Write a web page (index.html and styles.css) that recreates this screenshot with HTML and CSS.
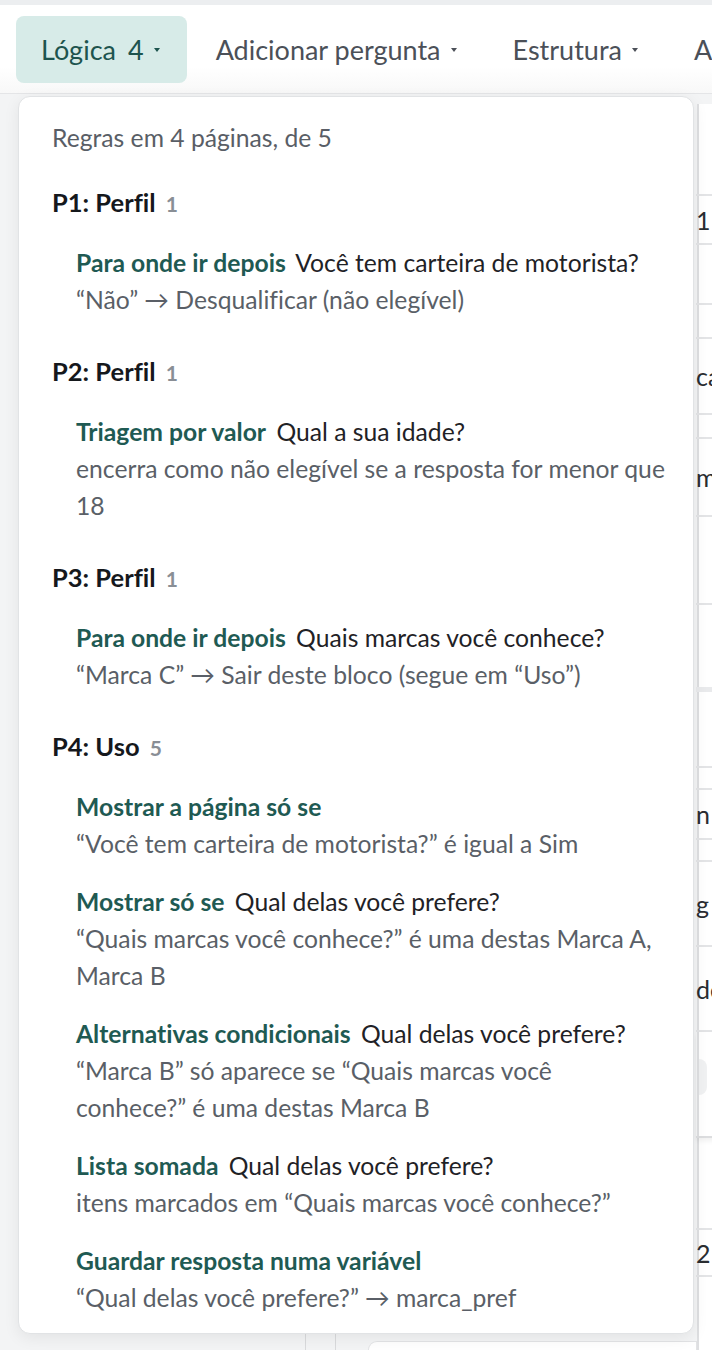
FILE: index.html
```html
<!DOCTYPE html>
<html lang="pt-BR">
<head>
    <meta charset="UTF-8">
    <meta name="viewport" content="width=device-width, initial-scale=1.0">
    <title>Lógica</title>
    <link rel="stylesheet" href="styles.css">
</head>
<body>
    <div class="top-strip"></div>

    <header class="toolbar">
        <div class="tab tab-active">Lógica<span class="tab-count">4</span><span class="caret"></span></div>
        <div class="tab">Adicionar pergunta<span class="caret"></span></div>
        <div class="tab">Estrutura<span class="caret"></span></div>
        <div class="tab">Aparência<span class="caret"></span></div>
    </header>

    <main class="workspace">
        <div class="canvas">
            <div class="canvas-foot">
                <div class="foot-rail"></div>
                <div class="foot-card"></div>
            </div>
        </div>

        <!-- planilha de perguntas atrás do menu -->
        <div class="sheet">
            <div class="sheet-row" style="height: 92px"></div>
            <div class="sheet-row" style="height: 49px">1</div>
            <div class="sheet-row" style="height: 60px"></div>
            <div class="sheet-row" style="height: 34px"></div>
            <div class="sheet-row" style="height: 76px">ca</div>
            <div class="sheet-row" style="height: 24px"></div>
            <div class="sheet-row" style="height: 78px">m</div>
            <div class="sheet-row" style="height: 88px"></div>
            <div class="sheet-row sheet-break" style="height: 87px"></div>
            <div class="sheet-row" style="height: 76px"></div>
            <div class="sheet-row" style="height: 22px"></div>
            <div class="sheet-row" style="height: 50px">n</div>
            <div class="sheet-row" style="height: 22px"></div>
            <div class="sheet-row" style="height: 85px">g</div>
            <div class="sheet-row" style="height: 85px">de</div>
            <div class="sheet-row sheet-end" style="height: 106px"><span class="sheet-pill"></span></div>
            <div class="sheet-row" style="height: 92px"></div>
            <div class="sheet-row" style="height: 47px">2</div>
        </div>
    </main>

    <div class="logic-menu">
        <div class="logic-summary">Regras em 4 páginas, de 5</div>

        <section class="logic-page">
            <h3 class="page-title">P1: Perfil <span class="page-count">1</span></h3>
            <div class="rule">
                <div><span class="rule-kind">Para onde ir depois</span> Você tem carteira de motorista?</div>
                <div class="rule-detail">“Não” → Desqualificar (não elegível)</div>
            </div>
        </section>

        <section class="logic-page">
            <h3 class="page-title">P2: Perfil <span class="page-count">1</span></h3>
            <div class="rule">
                <div><span class="rule-kind">Triagem por valor</span> Qual a sua idade?</div>
                <div class="rule-detail">encerra como não elegível se a resposta for menor que 18</div>
            </div>
        </section>

        <section class="logic-page">
            <h3 class="page-title">P3: Perfil <span class="page-count">1</span></h3>
            <div class="rule">
                <div><span class="rule-kind">Para onde ir depois</span> Quais marcas você conhece?</div>
                <div class="rule-detail">“Marca C” → Sair deste bloco (segue em “Uso”)</div>
            </div>
        </section>

        <section class="logic-page">
            <h3 class="page-title">P4: Uso <span class="page-count">5</span></h3>
            <div class="rule">
                <div><span class="rule-kind">Mostrar a página só se</span></div>
                <div class="rule-detail">“Você tem carteira de motorista?” é igual a Sim</div>
            </div>
            <div class="rule">
                <div><span class="rule-kind">Mostrar só se</span> Qual delas você prefere?</div>
                <div class="rule-detail">“Quais marcas você conhece?” é uma destas Marca A, Marca B</div>
            </div>
            <div class="rule">
                <div><span class="rule-kind">Alternativas condicionais</span> Qual delas você prefere?</div>
                <div class="rule-detail">“Marca B” só aparece se “Quais marcas você<br>conhece?” é uma destas Marca B</div>
            </div>
            <div class="rule">
                <div><span class="rule-kind">Lista somada</span> Qual delas você prefere?</div>
                <div class="rule-detail">itens marcados em “Quais marcas você conhece?”</div>
            </div>
            <div class="rule">
                <div><span class="rule-kind">Guardar resposta numa variável</span></div>
                <div class="rule-detail">“Qual delas você prefere?” → marca_pref</div>
            </div>
        </section>
    </div>
</body>
</html>
```

FILE: styles.css
```css
body {
    margin: 0;
    height: 1350px;
    overflow: hidden;
    font-family: 'Lato', 'Noto Sans', sans-serif;
    font-variant-ligatures: none;
    background: #f3f4f5;
    color: #1c1f23;
    position: relative;
}

.top-strip {
    height: 5px;
    background: #eceef0;
}

.toolbar {
    display: flex;
    align-items: center;
    gap: 4px;
    height: 88px;
    padding: 0 16px;
    background: linear-gradient(#fff 70%, #f8f8f8);
    border-bottom: 1px solid #e4e5e7;
    white-space: nowrap;
    overflow: hidden;
}

.tab {
    display: flex;
    align-items: center;
    height: 67px;
    padding: 0 27px 0 25px;
    border-radius: 8px;
    font-size: 27px;
    color: #4b5058;
    flex-shrink: 0;
}

.tab-active {
    background: #d7ebe8;
    color: #1d544e;
}

.tab-count {
    margin-left: 12px;
}

.caret {
    width: 0;
    height: 0;
    margin-left: 10px;
    margin-top: 2px;
    border-left: 3.5px solid transparent;
    border-right: 3.5px solid transparent;
    border-top: 4px solid currentColor;
}

.workspace {
    display: flex;
    height: 1256px;
}

.canvas {
    width: 697px;
    flex-shrink: 0;
    display: flex;
    flex-direction: column;
    justify-content: flex-end;
}

.canvas-foot {
    display: flex;
    align-items: flex-end;
    height: 22px;
}

.foot-rail {
    width: 30px;
    height: 100%;
    margin-left: 305px;
    border-left: 1px solid #d9dadc;
    border-right: 1px solid #d9dadc;
}

.foot-card {
    width: 340px;
    height: 8px;
    margin-left: 32px;
    background: #fff;
    border: 1px solid #e2e3e5;
    border-bottom: none;
    border-radius: 14px 0 0 0;
}

.sheet {
    flex: 1;
    margin-top: 10px;
    background: #fff;
    border-left: 2px solid #dedfe1;
    font-size: 25px;
    color: #2a2d31;
}

.sheet-row {
    display: flex;
    align-items: center;
    box-sizing: border-box;
    margin-left: -3px;
    border-bottom: 2px solid #e3e4e6;
}

.sheet-break {
    border-bottom: 5px solid #e9eaec;
}

.sheet-end {
    border-bottom: 2px solid #dcdddf;
    box-shadow: 0 3px 5px rgba(0, 0, 0, 0.06);
}

.sheet-pill {
    width: 8px;
    height: 36px;
    margin-top: -14px;
    margin-left: 3px;
    background: #f0f1f2;
    border-radius: 0 10px 10px 0;
}

/* menu de lógica aberto */
.logic-menu {
    position: absolute;
    top: 96px;
    left: 18px;
    width: 676px;
    box-sizing: border-box;
    padding: 22px 26px 17px 33px;
    background: #fff;
    border: 1px solid #e1e3e5;
    border-radius: 12px;
    box-shadow: 0 4px 16px rgba(0, 0, 0, 0.07);
    font-size: 24.7px;
    line-height: 37px;
    z-index: 1;
}

.logic-summary {
    color: #595e66;
    margin-bottom: 28px;
}

.logic-page + .logic-page {
    margin-top: 35px;
}

.page-title {
    margin: 0 0 22px;
    font-size: 25.5px;
    font-weight: 700;
    color: #15181c;
}

.page-count {
    margin-left: 4px;
    font-size: 21px;
    color: #898e95;
}

.rule {
    padding-left: 24px;
    color: #1f2226;
}

.rule + .rule {
    margin-top: 21px;
}

.rule-kind {
    font-weight: 700;
    color: #1f5a53;
    margin-right: 4px;
}

.rule-detail {
    color: #5a5f67;
}
```
